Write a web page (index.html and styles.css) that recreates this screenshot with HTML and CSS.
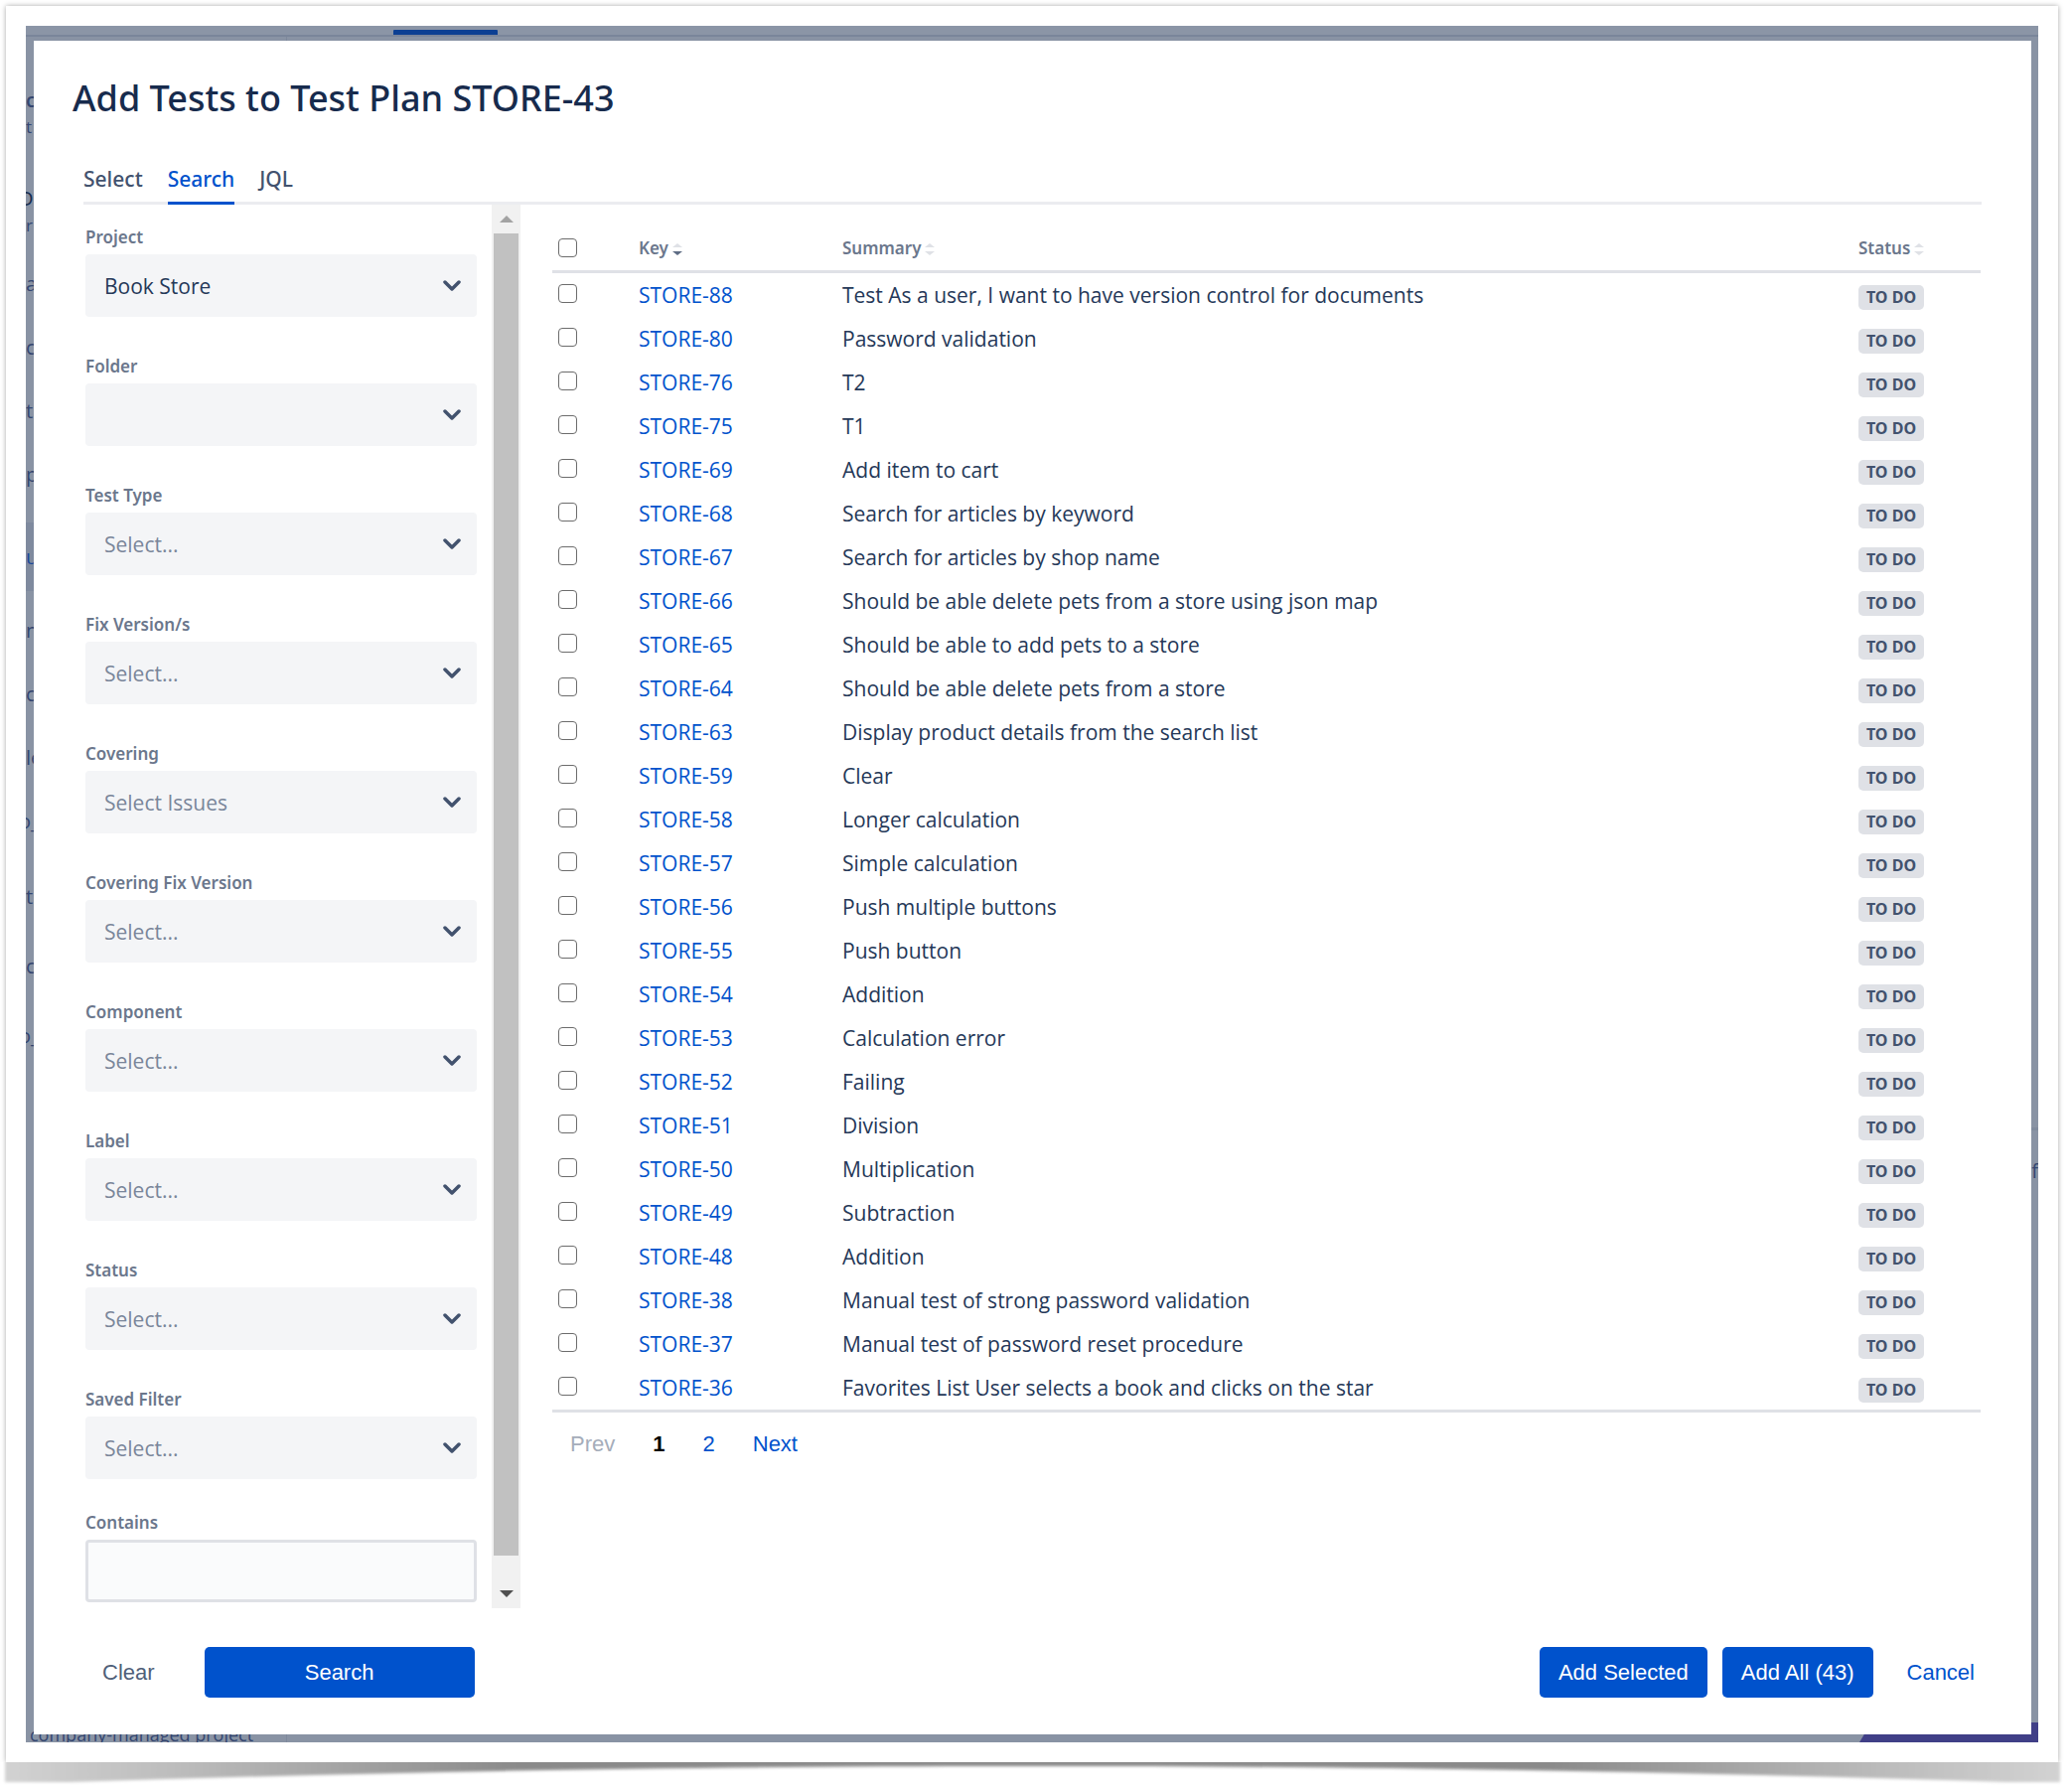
FILE: index.html
```
<!DOCTYPE html>
<html lang="en">
<head>
<meta charset="utf-8">
<meta name="viewport" content="width=device-width, initial-scale=1">
<title>Add Tests to Test Plan STORE-43</title>
<link rel="stylesheet" href="styles.css">
</head>
<body>
<div class="card">
  <div class="stage">
    <div class="underlay" aria-hidden="true">
      <div class="topbar"><span class="topbar-tab"></span></div>
      <div class="rail">
        <div class="rail-project"><p class="rail-name">c</p><p class="rail-kind">t</p></div>
        <div class="rail-board"><p class="rail-title cut">D</p><p class="rail-sub">r</p></div>
        <ul class="rail-list">
          <li>a</li>
          <li>c</li>
          <li>ti</li>
          <li>p</li>
          <li class="selected">u</li>
          <li>n</li>
          <li>c</li>
          <li>le</li>
          <li class="cut">o_</li>
          <li class="child first">t</li>
          <li class="child">c</li>
          <li class="child cut">o_</li>
        </ul>
        <p class="rail-foot">company-managed project</p>
      </div>
      <div class="behind"><div class="behind-top"></div><div class="behind-body"><p>f</p></div></div>
      <span class="corner"></span>
    </div>

    <main class="dialog" role="dialog" aria-labelledby="dialog-title">
      <h1 id="dialog-title">Add Tests to Test Plan STORE-43</h1>

      <nav class="tabs">
        <a href="#select">Select</a>
        <a href="#search" class="active" aria-current="page">Search</a>
        <a href="#jql">JQL</a>
      </nav>

      <div class="panel">
        <form class="filters" id="filters">
          <div class="field">
            <label for="project">Project</label>
            <div class="select"><select id="project" class="filled"><option>Book Store</option></select><svg viewBox="0 0 18 12"><path d="M2 2l7 7 7-7"/></svg></div>
          </div>
          <div class="field">
            <label for="folder">Folder</label>
            <div class="select"><select id="folder"><option></option></select><svg viewBox="0 0 18 12"><path d="M2 2l7 7 7-7"/></svg></div>
          </div>
          <div class="field">
            <label for="type">Test Type</label>
            <div class="select"><select id="type"><option>Select...</option></select><svg viewBox="0 0 18 12"><path d="M2 2l7 7 7-7"/></svg></div>
          </div>
          <div class="field">
            <label for="fix">Fix Version/s</label>
            <div class="select"><select id="fix"><option>Select...</option></select><svg viewBox="0 0 18 12"><path d="M2 2l7 7 7-7"/></svg></div>
          </div>
          <div class="field">
            <label for="covering">Covering</label>
            <div class="select"><select id="covering"><option>Select Issues</option></select><svg viewBox="0 0 18 12"><path d="M2 2l7 7 7-7"/></svg></div>
          </div>
          <div class="field">
            <label for="covfix">Covering Fix Version</label>
            <div class="select"><select id="covfix"><option>Select...</option></select><svg viewBox="0 0 18 12"><path d="M2 2l7 7 7-7"/></svg></div>
          </div>
          <div class="field">
            <label for="component">Component</label>
            <div class="select"><select id="component"><option>Select...</option></select><svg viewBox="0 0 18 12"><path d="M2 2l7 7 7-7"/></svg></div>
          </div>
          <div class="field">
            <label for="label">Label</label>
            <div class="select"><select id="label"><option>Select...</option></select><svg viewBox="0 0 18 12"><path d="M2 2l7 7 7-7"/></svg></div>
          </div>
          <div class="field">
            <label for="status">Status</label>
            <div class="select"><select id="status"><option>Select...</option></select><svg viewBox="0 0 18 12"><path d="M2 2l7 7 7-7"/></svg></div>
          </div>
          <div class="field last">
            <label for="saved">Saved Filter</label>
            <div class="select"><select id="saved"><option>Select...</option></select><svg viewBox="0 0 18 12"><path d="M2 2l7 7 7-7"/></svg></div>
          </div>
          <div class="field">
            <label for="contains">Contains</label>
            <input type="text" id="contains">
          </div>
        </form>

        <div class="scrollbar" aria-hidden="true">
          <span class="arrow"><svg viewBox="0 0 14 7"><path d="M0 7L7 0l7 7z"/></svg></span>
          <span class="thumb"></span>
          <span class="arrow down"><svg viewBox="0 0 14 7"><path d="M0 0l7 7 7-7z"/></svg></span>
        </div>

        <section class="results">
          <table>
            <thead>
              <tr>
                <th class="check"><input type="checkbox" aria-label="Select all"></th>
                <th class="key">Key<svg class="sort desc" viewBox="0 0 10 12"><path d="M0 4l5-4 5 4z"/><path class="lower" d="M0 8h10l-5 4z"/></svg></th>
                <th>Summary<svg class="sort" viewBox="0 0 10 12"><path d="M0 4l5-4 5 4z"/><path class="lower" d="M0 8h10l-5 4z"/></svg></th>
                <th class="status">Status<svg class="sort" viewBox="0 0 10 12"><path d="M0 4l5-4 5 4z"/><path class="lower" d="M0 8h10l-5 4z"/></svg></th>
              </tr>
            </thead>
            <tbody id="rows"></tbody>
          </table>
          <nav class="pager" aria-label="Pages">
            <span class="off">Prev</span>
            <strong>1</strong>
            <a href="#page-2">2</a>
            <a href="#page-2">Next</a>
          </nav>
        </section>
      </div>

      <footer class="actions">
        <button type="reset" form="filters" class="btn subtle">Clear</button>
        <button type="submit" form="filters" class="btn primary wide">Search</button>
        <div class="actions-end">
          <button type="button" class="btn primary">Add Selected</button>
          <button type="button" class="btn primary">Add All (43)</button>
          <button type="button" class="btn link">Cancel</button>
        </div>
      </footer>
    </main>
  </div>
</div>
<svg class="lift" viewBox="0 0 2086 29" preserveAspectRatio="none" aria-hidden="true">
  <defs>
    <linearGradient id="fade">
      <stop offset="0" stop-color="#d2d2d2"/>
      <stop offset=".08" stop-color="#bdbdbd"/>
      <stop offset=".25" stop-color="#8a8a8a"/>
      <stop offset=".75" stop-color="#8a8a8a"/>
      <stop offset=".92" stop-color="#bdbdbd"/>
      <stop offset="1" stop-color="#d2d2d2"/>
    </linearGradient>
    <filter id="soft" x="-1%" y="-50%" width="102%" height="200%"><feGaussianBlur stdDeviation="1.5"/></filter>
  </defs>
  <path fill="url(#fade)" filter="url(#soft)" d="M5-8H2074V20H2020C1700 10 1400 4 1040 4S380 10 70 20H5z"/>
</svg>
<script src="rows.js"></script>
</body>
</html>
```
FILE: rows.js
```
const tests = [
  [88, "Test As a user, I want to have version control for documents"],
  [80, "Password validation"],
  [76, "T2"],
  [75, "T1"],
  [69, "Add item to cart"],
  [68, "Search for articles by keyword"],
  [67, "Search for articles by shop name"],
  [66, "Should be able delete pets from a store using json map"],
  [65, "Should be able to add pets to a store"],
  [64, "Should be able delete pets from a store"],
  [63, "Display product details from the search list"],
  [59, "Clear"],
  [58, "Longer calculation"],
  [57, "Simple calculation"],
  [56, "Push multiple buttons"],
  [55, "Push button"],
  [54, "Addition"],
  [53, "Calculation error"],
  [52, "Failing"],
  [51, "Division"],
  [50, "Multiplication"],
  [49, "Subtraction"],
  [48, "Addition"],
  [38, "Manual test of strong password validation"],
  [37, "Manual test of password reset procedure"],
  [36, "Favorites List User selects a book and clicks on the star"]
];

document.getElementById("rows").innerHTML = tests.map(([id, summary]) => `
  <tr>
    <td class="check"><input type="checkbox" aria-label="Select STORE-${id}"></td>
    <td><a href="#STORE-${id}">STORE-${id}</a></td>
    <td>${summary}</td>
    <td class="status"><span class="badge">TO DO</span></td>
  </tr>`).join("");
```
FILE: styles.css
```
* {
  box-sizing: border-box;
}

body {
  margin: 0;
  background: #fff;
  color: #253858;
  font: 21px/30px "Open Sans", "Noto Sans", sans-serif;
}

h1, p, ul {
  margin: 0;
  padding: 0;
}

ul {
  list-style: none;
}

a {
  color: #0052cc;
  text-decoration: none;
}

.card {
  margin: 6px 14px 0 6px;
  padding: 20px;
  background: #fff;
  box-shadow: 0 0 5px rgba(0, 0, 0, 0.35);
  position: relative;
  clip-path: inset(-6px -6px 0 -6px);
}

.stage {
  display: grid;
  background: #8993a4;
}

/* dimmed page behind the dialog */
.underlay {
  grid-area: 1 / 1;
  display: grid;
  grid-template-columns: 263px 1fr;
  grid-template-rows: auto 1fr;
  position: relative;
  overflow: hidden;
  font-size: 20px;
  color: #344670;
}

.topbar {
  grid-column: 1 / -1;
  display: flex;
  align-items: flex-end;
  height: 11px;
  padding-left: 370px;
  background: #8b95a6;
  border-bottom: 2px solid #7a859a;
}

.topbar-tab {
  width: 105px;
  height: 5px;
  border-radius: 1px 1px 0 0;
  background: #0c3f93;
}

.rail {
  display: flex;
  flex-direction: column;
  border-right: 1px solid #7e899c;
}

.rail-project {
  padding-top: 50px;
  line-height: 27px;
}

.rail-name {
  font-weight: 600;
}

.rail-kind,
.rail-sub {
  font-size: 17px;
}

.rail-board {
  padding-top: 45px;
  line-height: 27px;
}

.rail-title {
  color: #172b4d;
}

.rail-list {
  padding-top: 14px;
}

.rail-list li {
  height: 64px;
  line-height: 64px;
}

.rail-list .selected {
  height: 69px;
  margin: 16px 0 8px;
  line-height: 69px;
  background: #7f8a9e;
  color: #1c4899;
}

.rail-list .child {
  height: 70px;
}

.rail-list .first {
  margin-top: 12px;
}

.cut {
  text-indent: -7px;
}

.rail-foot {
  margin-top: auto;
  padding-left: 4px;
  font-size: 18px;
  line-height: 16px;
}

.behind-top {
  height: 1101px;
  border-bottom: 3px solid #808b9d;
}

.behind-body {
  padding-top: 26px;
  text-align: right;
}

.corner {
  position: absolute;
  right: 0;
  bottom: 0;
  width: 180px;
  height: 20px;
  background: #403f87;
  clip-path: polygon(12px 0, 100% 0, 100% 100%, 0 100%);
}

/* dialog */
.dialog {
  grid-area: 1 / 1;
  z-index: 1;
  margin: 15px 7px 8px 8px;
  padding: 38px 38px 37px 39px;
  background: #fff;
}

h1,
.tabs a,
.field label,
th,
.badge {
  font-family: "Noto Sans", "Open Sans", sans-serif;
}

h1 {
  color: #172b4d;
  font-size: 36px;
  font-weight: 500;
  line-height: 40px;
}

.tabs {
  display: flex;
  gap: 25px;
  margin: 46px 12px 0 11px;
  border-bottom: 3px solid #ebecf0;
}

.tabs a {
  margin-bottom: -3px;
  padding-bottom: 8px;
  border-bottom: 3px solid transparent;
  color: #42526e;
  font-weight: 500;
}

.tabs .active {
  border-color: #0052cc;
  color: #0052cc;
}

.panel {
  display: grid;
  grid-template-columns: 394px 29px minmax(0, 1fr);
  margin: 0 13px;
}

/* filters */
.filters {
  padding: 21px 0 6px;
}

.field {
  margin-bottom: 38px;
}

.field.last {
  margin-bottom: 32px;
}

.field:last-child {
  margin-bottom: 0;
}

.field label {
  display: block;
  margin-bottom: 5px;
  color: #6b778c;
  font-size: 17px;
  font-weight: 600;
  line-height: 24px;
}

.select {
  position: relative;
}

.select select,
.field input {
  display: block;
  width: 100%;
  height: 63px;
  padding: 0 19px;
  border: 0;
  border-radius: 4px;
  background: #f4f5f7;
  color: #7a869a;
  font: inherit;
  appearance: none;
}

.select .filled {
  color: #253858;
}

.field input {
  border: 3px solid #dfe1e6;
  background: #fafbfc;
}

.select svg {
  position: absolute;
  top: 26px;
  right: 16px;
  width: 18px;
  height: 12px;
  fill: none;
  stroke: #42526e;
  stroke-width: 3.5;
  stroke-linecap: round;
  stroke-linejoin: round;
  pointer-events: none;
}

.scrollbar {
  display: flex;
  flex-direction: column;
  width: 29px;
  margin-left: 15px;
  padding: 0 2px;
  background: #f1f1f1;
}

.arrow {
  display: grid;
  place-items: center;
  height: 29px;
  fill: #a3a3a3;
}

.arrow svg {
  width: 14px;
  height: 7px;
}

.arrow.down {
  margin-top: 24px;
  fill: #505050;
}

.thumb {
  flex: 1;
  background: #c1c1c1;
}

/* results */
.results {
  margin-left: 47px;
}

table {
  width: 100%;
  border-spacing: 0;
  table-layout: fixed;
}

th {
  padding: 32px 0 10px;
  border-bottom: 3px solid #dfe1e6;
  color: #6b778c;
  font-size: 17px;
  font-weight: 600;
  line-height: 24px;
  text-align: left;
}

td {
  height: 44px;
  padding: 7px 0;
}

th.check {
  width: 87px;
  padding: 31px 0 11px;
}

th.key {
  width: 205px;
}

th.status {
  width: 123px;
}

.check input {
  display: block;
  width: 19px;
  height: 19px;
  margin: 0 0 0 6px;
  border: 1px solid #6c6c6c;
  border-radius: 4px;
  background: #fff;
  appearance: none;
}

.check input:checked {
  border-color: #0052cc;
  background: #0052cc;
}

td.check {
  padding: 6px 0 9px;
}

td.status {
  padding: 11px 0 7px;
}

tbody tr:last-child td {
  height: 47px;
  border-bottom: 3px solid #dfe1e6;
}

.sort {
  width: 10px;
  height: 12px;
  margin-left: 4px;
  vertical-align: -1px;
  fill: #dfe1e6;
}

.desc .lower {
  fill: #5e6c84;
}

.badge {
  display: block;
  width: 66px;
  border-radius: 5px;
  background: #dfe1e6;
  color: #42526e;
  font-size: 16px;
  font-weight: 700;
  line-height: 25px;
  text-align: center;
}

.pager {
  display: flex;
  gap: 38px;
  margin: 19px 0 0 18px;
  font: 22px/26px "Liberation Sans", Arial, sans-serif;
}

.pager .off {
  color: #a5adba;
}

.pager strong {
  color: #000;
}

/* footer */
.actions {
  display: flex;
  margin-top: 39px;
  padding-left: 11px;
}

.actions-end {
  display: flex;
  gap: 15px;
  margin-left: auto;
}

.btn {
  height: 51px;
  padding: 0 19px;
  border: 0;
  border-radius: 5px;
  background: none;
  color: #505f79;
  font: 22px/50px "Liberation Sans", Arial, sans-serif;
}

.primary {
  background: #0052cc;
  color: #fff;
}

.link {
  color: #0052cc;
}

.wide {
  width: 272px;
  margin-left: 31px;
}

/* curved shadow under the card */
.lift {
  display: block;
  width: 100%;
  height: 29px;
}
```
